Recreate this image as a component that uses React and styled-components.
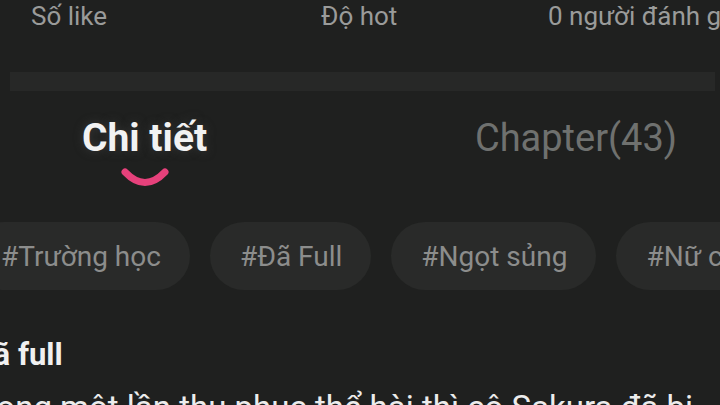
import React from "react";
import styled, { createGlobalStyle } from "styled-components";

const Global = createGlobalStyle`
  html, body {
    margin: 0;
    padding: 0;
    background: #1f201f;
  }
  body {
    width: 720px;
    height: 405px;
    overflow: hidden;
    font-family: Roboto, "Noto Sans", "Liberation Sans", sans-serif;
  }
`;

const Page = styled.div`
  width: 720px;
  height: 405px;
  overflow: hidden;
  background: #1f201f;
  display: flex;
  flex-direction: column;
  & > * {
    flex-shrink: 0;
  }
`;

const StatsRow = styled.div`
  display: flex;
  padding: 1px 0 0 31px;
  height: 31px;
  white-space: nowrap;
`;

const Stat = styled.div`
  width: ${(p) => p.$w || "auto"};
  flex-shrink: 0;
  font-size: 26px;
  line-height: 30px;
  color: #9a9b9a;
`;

const Divider = styled.div`
  margin: 40px 5px 0 10px;
  height: 19px;
  background: #272827;
`;

const Tabs = styled.div`
  display: flex;
  justify-content: space-between;
  align-items: flex-start;
  padding: 0 43px 0 82px;
  margin-top: 23px;
`;

const Tab = styled.div`
  display: flex;
  flex-direction: column;
  align-items: center;
`;

const TabLabel = styled.div`
  font-size: ${(p) => (p.$active ? "39px" : "38px")};
  line-height: 48px;
  font-weight: ${(p) => (p.$active ? 700 : 400)};
  color: ${(p) => (p.$active ? "#f2f2f2" : "#6f716f")};
  white-space: nowrap;
  text-shadow: ${(p) => (p.$active ? "0 0 10px rgba(60,60,60,0.9)" : "none")};
`;

const Indicator = styled.svg`
  display: block;
  margin-top: 5px;
  width: 48px;
  height: 22px;
`;

const TagRow = styled.div`
  display: flex;
  gap: 20px;
  margin: 33px 0 0 -29px;
  white-space: nowrap;
`;

const Tag = styled.div`
  flex-shrink: 0;
  height: 68px;
  padding: 0 29px 0 30px;
  border-radius: 34px;
  background: #292a29;
  color: #8c8d8c;
  font-size: 28px;
  display: flex;
  align-items: center;
`;

const Heading = styled.div`
  margin: 47px 0 0 -27px;
  font-size: 31px;
  line-height: 36px;
  font-weight: 700;
  color: #f0f0f0;
  white-space: nowrap;
`;

const Body = styled.div`
  margin: 15px 0 0 -33px;
  font-size: 33px;
  line-height: 40px;
  color: #ececec;
  white-space: nowrap;
`;

export default function App() {
  return (
    <Page>
      <Global />
      <StatsRow>
        <Stat $w="290px">Số like</Stat>
        <Stat $w="227px">Độ hot</Stat>
        <Stat>0 người đánh giá</Stat>
      </StatsRow>
      <Divider />
      <Tabs>
        <Tab>
          <TabLabel $active>Chi tiết</TabLabel>
          <Indicator viewBox="0 0 48 22">
            <path
              d="M4 5 Q24 26 44 5"
              fill="none"
              stroke="#e6417b"
              strokeWidth="7"
              strokeLinecap="round"
            />
          </Indicator>
        </Tab>
        <Tab>
          <TabLabel>Chapter(43)</TabLabel>
        </Tab>
      </Tabs>
      <TagRow>
        <Tag>#Trường học</Tag>
        <Tag>#Đã Full</Tag>
        <Tag>#Ngọt sủng</Tag>
        <Tag>#Nữ cường</Tag>
      </TagRow>
      <Heading>Đã full</Heading>
      <Body>Trong một lần thu phục thể hài thì cô Sakura đã bị</Body>
    </Page>
  );
}
